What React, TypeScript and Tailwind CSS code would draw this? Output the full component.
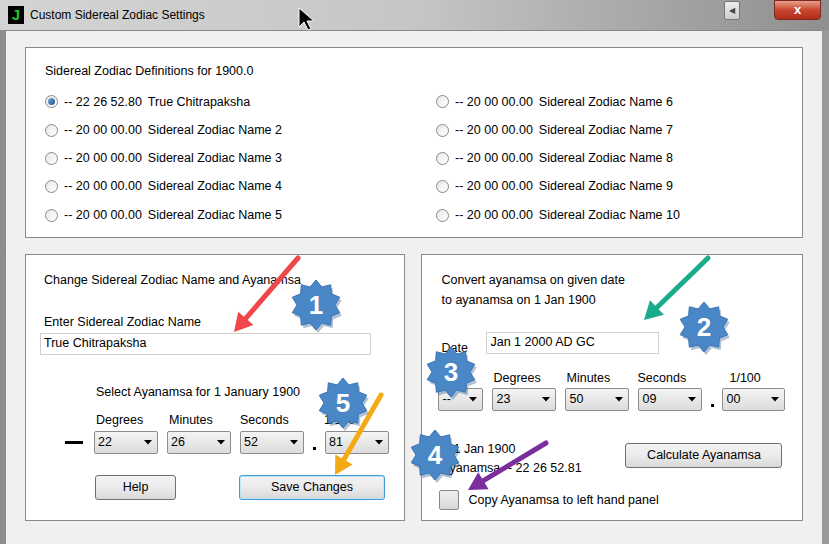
import React from "react"

const left = [
  ["-- 22 26 52.80", "True Chitrapaksha", true],
  ["-- 20 00 00.00", "Sidereal Zodiac Name 2"],
  ["-- 20 00 00.00", "Sidereal Zodiac Name 3"],
  ["-- 20 00 00.00", "Sidereal Zodiac Name 4"],
  ["-- 20 00 00.00", "Sidereal Zodiac Name 5"],
] as [string, string, boolean?][]
const right = [6, 7, 8, 9, 10].map((n) => ["-- 20 00 00.00", `Sidereal Zodiac Name ${n}`] as [string, string])

function Radio({ on }: { on?: boolean }) {
  return (
    <span className="w-[13px] h-[13px] rounded-full border border-[#8a8a8a] bg-gradient-to-br from-[#e8e8e8] to-white flex items-center justify-center">
      {on && <span className="w-[7px] h-[7px] rounded-full bg-gradient-to-br from-[#7ab0e0] to-[#1b4f8a]" />}
    </span>
  )
}

function Row({ a, b, on }: { a: string; b: string; on?: boolean }) {
  return (
    <div className="flex items-center gap-[6px] h-[28.3px]">
      <Radio on={on} />
      <span>{a}</span>
      <span>{b}</span>
    </div>
  )
}

function Select({ v, w }: { v: string; w: number }) {
  return (
    <div
      className="h-[23px] flex items-center justify-between px-[3px] border border-[#8c8c8c] rounded-[2px] bg-gradient-to-b from-[#f4f4f4] to-[#dcdcdc]"
      style={{ width: w }}
    >
      <span>{v}</span>
      <svg width="8" height="5" viewBox="0 0 8 5" className="mr-[2px]">
        <path d="M0 0h8L4 4.5z" fill="#000" />
      </svg>
    </div>
  )
}

function Btn({ children, w, focus }: { children: React.ReactNode; w: number; focus?: boolean }) {
  return (
    <div
      className={`h-[25px] flex items-center justify-center rounded-[3px] border bg-gradient-to-b from-[#f3f3f3] via-[#ebebeb] to-[#d9d9d9] ${
        focus ? "border-[#3c9ed8] shadow-[inset_0_0_0_1px_#bfe3f7]" : "border-[#707070]"
      }`}
      style={{ width: w }}
    >
      {children}
    </div>
  )
}

function Star({ x, y, n }: { x: number; y: number; n: string }) {
  const pts: string[] = []
  for (let i = 0; i < 20; i++) {
    const r = i % 2 ? 19 : 25
    const a = (Math.PI * 2 * i) / 20 - Math.PI / 2
    pts.push(`${x + r * Math.cos(a)},${y + r * Math.sin(a)}`)
  }
  return (
    <g>
      <polygon points={pts.join(" ")} fill="#1d4f80" opacity="0.35" transform="translate(2,3)" />
      <polygon points={pts.join(" ")} fill="#4a87c7" stroke="#3a74b2" />
      <text x={x} y={y + 9} textAnchor="middle" fontSize="26" fontWeight="bold" fill="#fff" fontFamily="Liberation Sans, sans-serif">
        {n}
      </text>
    </g>
  )
}

function Arrow({ x1, y1, x2, y2, c }: { x1: number; y1: number; x2: number; y2: number; c: string }) {
  const dx = x2 - x1, dy = y2 - y1
  const L = Math.hypot(dx, dy)
  const ux = dx / L, uy = dy / L
  const bx = x2 - ux * 18, by = y2 - uy * 18
  return (
    <g>
      <line x1={x1} y1={y1} x2={bx} y2={by} stroke={c} strokeWidth="5" strokeLinecap="round" />
      <polygon points={`${x2},${y2} ${bx - uy * 10},${by + ux * 10} ${bx + uy * 10},${by - ux * 10}`} fill={c} />
    </g>
  )
}

export default function App() {
  return (
    <div
      className="relative w-[829px] h-[544px] overflow-hidden bg-gradient-to-r from-[#8d8d8d] via-[#b4b4b4] to-[#9a9a9a] text-[12.5px] text-black"
      style={{ fontFamily: "'Liberation Sans', Arial, sans-serif" }}
    >
      {/* title bar */}
      <div className="h-[30px] flex items-center px-[8px] bg-gradient-to-r from-[#d4d4d4] via-[#c6c6c6] to-[#8f8f8f]">
        <div className="w-[16px] h-[18px] bg-black flex items-center justify-center text-[#22c322] font-bold text-[15px]">J</div>
        <span className="ml-[6px] text-[12px]">Custom Sidereal Zodiac Settings</span>
        <div className="ml-auto flex items-start self-start">
          <div className="mt-[1px] w-[16px] h-[19px] border border-[#777] rounded-[2px] bg-gradient-to-b from-[#eee] to-[#ccc] flex items-center justify-center text-[8px] text-[#444]">◀</div>
          <div className="ml-[34px] w-[47px] h-[20px] rounded-b-[4px] border border-[#7a2a20] bg-gradient-to-b from-[#e9a08c] via-[#c7452f] to-[#b32c17] flex items-center justify-center text-white font-bold text-[13px]">x</div>
        </div>
      </div>
      {/* body */}
      <div className="mx-[5px] mr-[7px] h-[514px] bg-[#f0f0f0] border-l border-t border-[#888] px-[19px] pt-[16px] flex flex-col">
        <div className="h-[191px] bg-white border border-[#8a8a8a] px-[19px] pt-[14px]">
          <div className="mb-[7px]">Sidereal Zodiac Definitions for 1900.0</div>
          <div className="flex">
            <div className="w-[391px]">
              {left.map(([a, b, on]) => <Row key={b} a={a} b={b} on={on} />)}
            </div>
            <div>
              {right.map(([a, b]) => <Row key={b} a={a} b={b} />)}
            </div>
          </div>
        </div>
        <div className="flex gap-[16px] mt-[16px]">
          <div className="w-[382px] h-[267px] bg-white border border-[#8a8a8a] pl-[14px] pt-[16px]">
            <div className="pl-[4px]">Change Sidereal Zodiac Name and Ayanamsa</div>
            <div className="pl-[4px] mt-[23px]">Enter Sidereal Zodiac Name</div>
            <div className="mt-[1px] w-[331px] h-[22px] border border-[#d0d0d0] flex items-center px-[3px]">True Chitrapaksha</div>
            <div className="ml-[56px] mt-[28px]">Select Ayanamsa for 1 January 1900</div>
            <div className="flex ml-[56px] mt-[10px]">
              <span className="w-[73px]">Degrees</span>
              <span className="w-[71px]">Minutes</span>
              <span className="w-[84px]">Seconds</span>
              <span>1/100</span>
            </div>
            <div className="flex items-center mt-[1px]">
              <div className="ml-[25px] w-[18px] h-[3px] bg-black mr-[11px]" />
              <Select v="22" w={64} />
              <div className="w-[9px]" />
              <Select v="26" w={64} />
              <div className="w-[9px]" />
              <Select v="52" w={64} />
              <div className="w-[21px] flex justify-center"><span className="w-[3px] h-[3px] bg-black mt-[12px]" /></div>
              <Select v="81" w={64} />
            </div>
            <div className="flex mt-[21px] ml-[55px]">
              <Btn w={81}>Help</Btn>
              <div className="w-[63px]" />
              <Btn w={146} focus>Save Changes</Btn>
            </div>
          </div>
          <div className="w-[383px] h-[267px] bg-white border border-[#8a8a8a] pl-[19px] pt-[16px]">
            <div>Convert ayanamsa on given date</div>
            <div className="mt-[1px]">to ayanamsa on 1 Jan 1900</div>
            <div className="flex items-end mt-[22px]">
              <span className="w-[45px] mb-[-4px]">Date</span>
              <div className="w-[173px] h-[22px] border border-[#d0d0d0] flex items-center px-[3px]">Jan 1 2000 AD GC</div>
            </div>
            <div className="flex mt-[15px] ml-[52px]">
              <span className="w-[73px]">Degrees</span>
              <span className="w-[71px]">Minutes</span>
              <span className="w-[92px]">Seconds</span>
              <span>1/100</span>
            </div>
            <div className="flex items-center mt-[1px] ml-[-3px]">
              <Select v="--" w={45} />
              <div className="w-[9px]" />
              <Select v="23" w={64} />
              <div className="w-[9px]" />
              <Select v="50" w={64} />
              <div className="w-[9px]" />
              <Select v="09" w={64} />
              <div className="w-[20px] flex justify-center"><span className="w-[3px] h-[3px] bg-black mt-[12px]" /></div>
              <Select v="00" w={63} />
            </div>
            <div className="flex mt-[32px]">
              <div className="w-[184px] leading-[19px] mt-[-3px]">
                <div className="pl-[12px]">1 Jan 1900</div>
                <div>Ayanamsa -- 22 26 52.81</div>
              </div>
              <Btn w={157}>Calculate Ayanamsa</Btn>
            </div>
            <div className="flex items-center mt-[12px] ml-[-2px]">
              <span className="w-[20px] h-[20px] border border-[#888] rounded-[2px] bg-gradient-to-b from-[#f0f0f0] to-[#d8d8d8]" />
              <span className="ml-[9px]">Copy Ayanamsa to left hand panel</span>
            </div>
          </div>
        </div>
      </div>
      {/* annotations */}
      <svg className="absolute inset-0 pointer-events-none" width="829" height="544">
        <Arrow x1={298} y1={258} x2={234} y2={332} c="#f0474a" />
        <Arrow x1={708} y1={258} x2={644} y2={320} c="#1aab8a" />
        <Arrow x1={381} y1={395} x2={335} y2={475} c="#f5a914" />
        <Arrow x1={546} y1={443} x2={468} y2={490} c="#7b2f9e" />
        <Star x={316} y={305} n="1" />
        <Star x={704} y={327} n="2" />
        <Star x={451} y={372} n="3" />
        <Star x={435} y={455} n="4" />
        <Star x={343} y={403} n="5" />
        <path d="M299 8v19l5-5 4 8 3-1-4-8h7z" fill="#000" stroke="#fff" strokeWidth="1" />
      </svg>
    </div>
  )
}
